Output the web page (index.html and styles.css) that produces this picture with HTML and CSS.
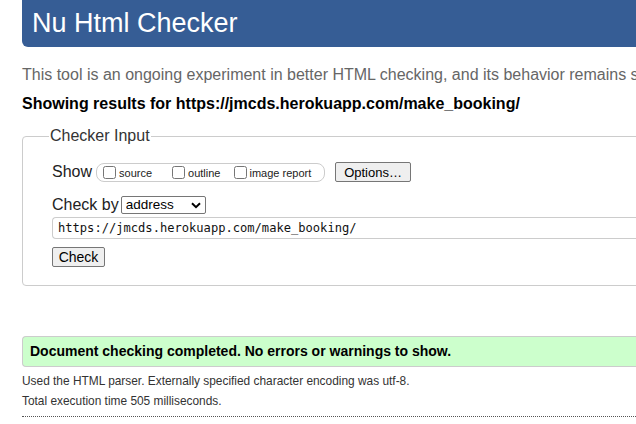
FILE: index.html
```html
<!DOCTYPE html>
<html lang="en">
<head>
<meta charset="utf-8">
<title>Nu Html Checker</title>
<link rel="stylesheet" href="styles.css">
</head>
<body>
<div class="page">
  <h1 class="title">Nu Html Checker</h1>
  <p class="intro">This tool is an ongoing experiment in better HTML checking, and its behavior remains subject to change</p>
  <p class="showing">Showing results for https://jmcds.herokuapp.com/make_booking/</p>
  <form class="checker">
    <fieldset class="inputs">
      <legend class="legend">Checker Input</legend>
      <div class="row show-row">
        <span class="lbl">Show</span>
        <span class="opts">
          <label class="opt opt-source"><input type="checkbox"><span>source</span></label>
          <label class="opt opt-outline"><input type="checkbox"><span>outline</span></label>
          <label class="opt opt-image"><input type="checkbox"><span>image report</span></label>
        </span>
        <button type="button" class="btn options">Options…</button>
      </div>
      <div class="row by-row">
        <span class="lbl">Check by</span>
        <select class="sel"><option>address</option></select>
      </div>
      <input class="url" type="text" value="https://jmcds.herokuapp.com/make_booking/">
      <button type="button" class="btn check">Check</button>
    </fieldset>
  </form>
  <p class="success">Document checking completed. No errors or warnings to show.</p>
  <p class="details">Used the HTML parser. Externally specified character encoding was utf-8.</p>
  <p class="details time">Total execution time 505 milliseconds.</p>
  <div class="rule"></div>
</div>
</body>
</html>
```

FILE: styles.css
```css
html, body {
  margin: 0;
  padding: 0;
  background: #fff;
  overflow: hidden;
}
body {
  font-family: "Liberation Sans", Arial, sans-serif;
  color: #000;
}
.page {
  margin-left: 22px;
  width: 700px;
}
.title {
  margin: 0;
  height: 47px;
  box-sizing: border-box;
  padding: 6px 0 0 10px;
  background: #365d95;
  color: #fff;
  font-size: 27px;
  font-weight: normal;
  line-height: 34px;
  border-radius: 0 0 0 6px;
}
.intro {
  margin: 19px 0 0 0;
  font-size: 16px;
  line-height: 18px;
  color: #666;
  white-space: nowrap;
}
.showing {
  margin: 11px 0 0 0;
  font-size: 16px;
  line-height: 18px;
  font-weight: bold;
  white-space: nowrap;
}
.checker {
  margin: 14px 0 0 0;
}
.inputs {
  margin: 0;
  padding: 17px 0 18px 29px;
  border: 1px solid #ccc;
  border-radius: 4px 0 0 4px;
  min-width: 0;
}
.legend {
  margin-left: -3px;
  padding: 0 1px;
  font-size: 16px;
  line-height: 18px;
  color: #333;
}
.row {
  display: flex;
  align-items: center;
}
.lbl {
  font-size: 16px;
  line-height: 18px;
  color: #222;
}
.show-row {
  height: 20px;
}
.opts {
  display: flex;
  align-items: center;
  margin-left: 4px;
  width: 229px;
  height: 19px;
  box-sizing: border-box;
  border: 1px solid #ccc;
  border-radius: 8px;
  padding-left: 6px;
}
.opt {
  display: flex;
  align-items: center;
  font-size: 11px;
  color: #222;
}
.opt span {
  position: relative;
  top: 1px;
}
.opt input {
  margin: 0 3px 0 0;
  width: 13px;
  height: 13px;
}
.opt-outline { margin-left: 20px; }
.opt-image { margin-left: 14px; }
.opt-image input { margin-right: 2px; }
.btn {
  font-family: "Liberation Sans", Arial, sans-serif;
  font-size: 13px;
  color: #000;
  background: #efefef;
  border: 1px solid #767676;
  border-radius: 2px;
  padding: 0;
  box-sizing: border-box;
  height: 20px;
}
.options {
  margin-left: 10px;
  width: 76px;
}
.by-row {
  margin-top: 14px;
  height: 18px;
}
.sel {
  margin-left: 2px;
  width: 85px;
  height: 18px;
  box-sizing: border-box;
  -webkit-appearance: none;
  appearance: none;
  border: 1px solid #767676;
  border-radius: 2px;
  background: #fff url("data:image/svg+xml,%3Csvg xmlns='http://www.w3.org/2000/svg' width='10' height='7' viewBox='0 0 10 7'%3E%3Cpath d='M1 1.2 L5 5.2 L9 1.2' fill='none' stroke='%23000' stroke-width='2'/%3E%3C/svg%3E") no-repeat right 4px center;
  font-family: "Liberation Sans", Arial, sans-serif;
  font-size: 13.5px;
  color: #000;
  padding: 0 0 0 4px;
  line-height: 16px;
}
.url {
  display: block;
  margin-top: 3px;
  width: 660px;
  height: 22px;
  box-sizing: border-box;
  border: 1px solid #ccc;
  border-right: 0;
  border-radius: 4px 0 0 4px;
  padding: 0 0 0 5px;
  font-family: "DejaVu Sans Mono", "Liberation Mono", monospace;
  font-size: 12.1px;
  color: #111;
  background: #fff;
}
.check {
  display: block;
  margin-top: 8px;
  width: 53px;
  font-size: 14px;
}
.success {
  margin: 50px 0 0 0;
  height: 31px;
  box-sizing: border-box;
  border: 1px solid #ccc;
  border-right: 0;
  border-radius: 4px 0 0 4px;
  background: #ccffcc;
  padding: 0 0 0 7px;
  font-size: 14px;
  font-weight: bold;
  line-height: 29px;
  white-space: nowrap;
}
.details {
  margin: 6px 0 0 0;
  font-size: 11.9px;
  line-height: 16px;
  color: #333;
  white-space: nowrap;
}
.time {
  margin-top: 4px;
}
.rule {
  margin-top: 7px;
  border-bottom: 1px dotted #555;
}
```
